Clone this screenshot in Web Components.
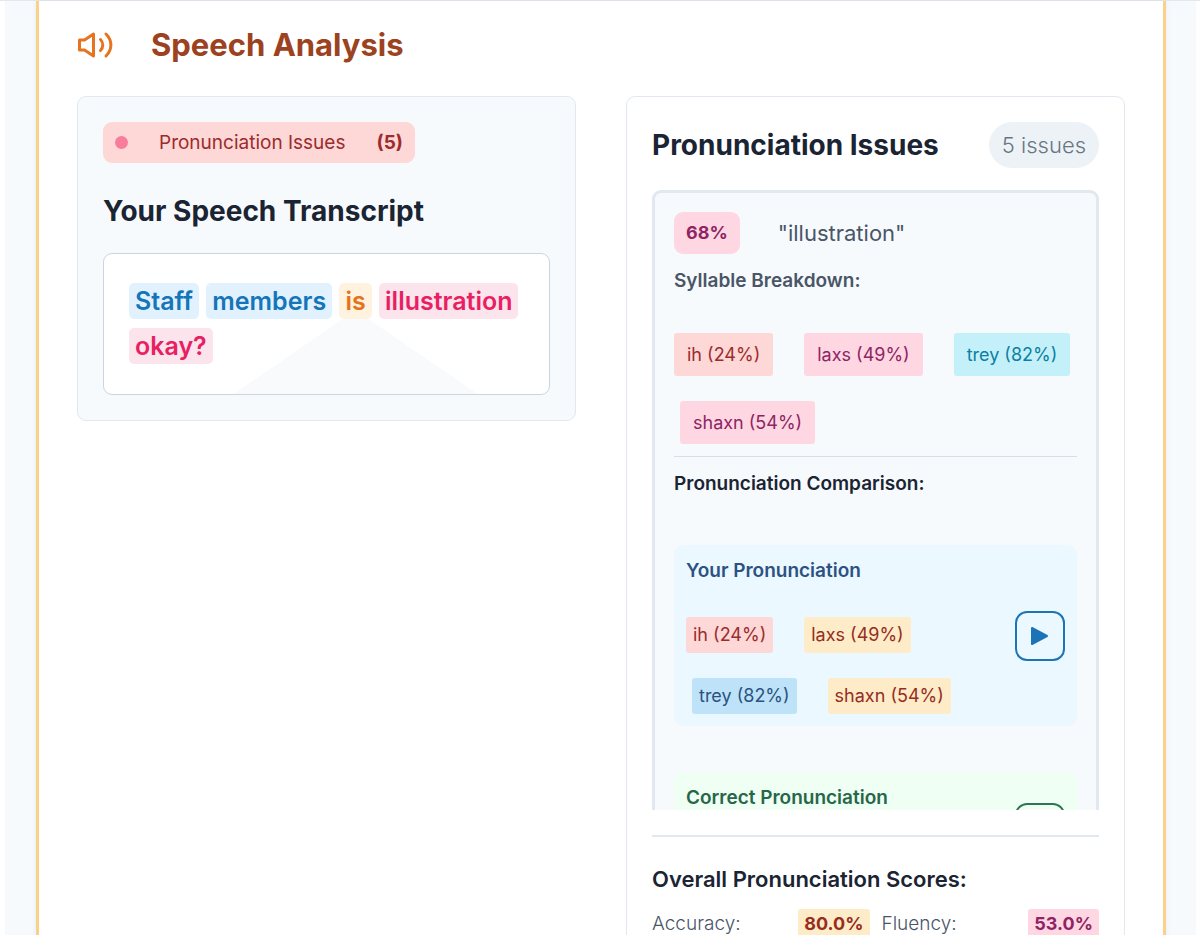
<!DOCTYPE html>
<html lang="en">
<head>
<meta charset="utf-8">
<title>Speech Analysis</title>
<style>
  html { overflow:hidden; }
  body { margin:0; background:#fff; font-family: Inter, "Liberation Sans", sans-serif; color:#1a2433; }
</style>
</head>
<body>
<speech-page>
  <span slot="title">Speech Analysis</span>

  <transcript-card>
    <issue-count slot="filter" count="5">Pronunciation Issues</issue-count>
    <span slot="title">Your Speech Transcript</span>
    <speech-word level="good">Staff</speech-word>
    <speech-word level="good">members</speech-word>
    <speech-word level="fair" pointer>is</speech-word>
    <speech-word level="poor">illustration</speech-word>
    <speech-word level="poor">okay?</speech-word>
  </transcript-card>

  <issues-card>
    <span slot="title">Pronunciation Issues</span>
    <span slot="total">5 issues</span>
    <issue-item score="68%" word="illustration">
      <chip-row slot="syllables">
        <score-chip tone="red" roomy>ih (24%)</score-chip>
        <score-chip tone="pink" roomy>laxs (49%)</score-chip>
        <score-chip tone="cyan" roomy>trey (82%)</score-chip>
        <score-chip tone="pink" roomy>shaxn (54%)</score-chip>
      </chip-row>
      <play-panel tone="blue" label="Your Pronunciation">
        <chip-row>
          <score-chip tone="red">ih (24%)</score-chip>
          <score-chip tone="orange">laxs (49%)</score-chip>
          <score-chip tone="blue">trey (82%)</score-chip>
          <score-chip tone="orange">shaxn (54%)</score-chip>
        </chip-row>
      </play-panel>
      <play-panel tone="green" label="Correct Pronunciation"></play-panel>
    </issue-item>
    <overall-score slot="scores" label="Accuracy:" tone="orange">80.0%</overall-score>
    <overall-score slot="scores" label="Fluency:" tone="pink">53.0%</overall-score>
  </issues-card>
</speech-page>

<script>
// Shared tone rules for chips and score badges
const TONES = `
  .red    { background:#fed7d7; color:#9b2c2c; }
  .pink   { background:#fed7e2; color:#8f2465; }
  .cyan   { background:#c4f1f9; color:#0c7fa3; }
  .orange { background:#feebc8; color:#962d20; }
  .blue   { background:#bee3f8; color:#2c5282; }
`;

class BaseElement extends HTMLElement {
  connectedCallback() {
    if (this.shadowRoot) return;
    this.attachShadow({ mode: 'open' });
    this.shadowRoot.innerHTML = this.render();
  }
}

class SpeechPage extends BaseElement {
  render() {
    return `
      <style>
        :host { display:block; border-top:1px solid #e2e8f0; }
        .backdrop { margin:0 4px 0 5px; padding:0 30px 0 31px; background:#f7fafc; }
        section {
          box-sizing:border-box; min-height:100vh; padding:24px 38px 38px; background:#fff;
          border:solid #fbd08a; border-width:0 3px; box-shadow:0 0 6px rgba(0,0,0,.06);
        }
        header { display:flex; align-items:center; gap:38px; margin-bottom:32px; }
        svg { display:block; width:36px; height:36px; }
        h1 { margin:0; font-size:31px; line-height:39px; font-weight:700; color:#9c4221; }
        .columns { display:grid; grid-template-columns:1fr 1fr; gap:50px; align-items:start; }
      </style>
      <div class="backdrop">
        <section>
          <header>
            <svg viewBox="0 0 36 36" fill="none" stroke="#e6731f" stroke-width="3" stroke-linecap="round" stroke-linejoin="round" aria-hidden="true">
              <path d="M2.500 13H7.500L16.500 7V29L7.500 23H2.500Z"/>
              <path d="M23.500 12.500C26.500 15.500 26.500 20.500 23.500 23.500"/>
              <path d="M29 7C35.500 13.500 35.500 22.500 29 29"/>
            </svg>
            <h1><slot name="title"></slot></h1>
          </header>
          <div class="columns"><slot></slot></div>
        </section>
      </div>`;
  }
}

class IssueCount extends BaseElement {
  render() {
    return `
      <style>
        :host { display:inline-flex; align-items:center; gap:31px; padding:6px 12px; border-radius:9px; background:#fed7d7; color:#9b2c2c; font-size:19px; line-height:29px; }
        i { width:13px; height:13px; border-radius:50%; background:#f87c9b; }
        b { font-weight:700; }
      </style>
      <i></i><slot></slot><b>(${this.getAttribute('count')})</b>`;
  }
}

class TranscriptCard extends BaseElement {
  render() {
    return `
      <style>
        :host { display:flex; flex-direction:column; align-items:flex-start; padding:25px; border:1px solid #e2e8f0; border-radius:9px; background:#f7fafc; }
        h2 { margin:31px 0 25px; font-size:28px; line-height:34px; font-weight:700; }
        p {
          position:relative; isolation:isolate; overflow:hidden; box-sizing:border-box; width:100%;
          margin:0; padding:25px; border:1px solid #cbd5e0; border-radius:9px; background:#fff;
          font-size:25px; line-height:45px; font-weight:600;
        }
      </style>
      <slot name="filter"></slot>
      <h2><slot name="title"></slot></h2>
      <p><slot></slot></p>`;
  }
}

class SpeechWord extends BaseElement {
  render() {
    return `
      <style>
        :host { display:inline-block; position:relative; margin-right:1px; padding:3px 6px; border-radius:5px; line-height:30px; white-space:nowrap; }
        :host([level="good"]) { background:#e1f2fe; color:#1575b9; }
        :host([level="fair"]) { background:#fff3e0; color:#e6731a; }
        :host([level="poor"]) { background:#fce4ec; color:#e91e63; }
        /* wide arrow that opens downwards behind the word */
        .arrow {
          position:absolute; z-index:-1; top:75%; left:50%; width:244px; height:84px; margin-left:-122px;
          background:#f9fafc; clip-path:polygon(50% 0, 100% 100%, 0 100%);
        }
      </style>
      <slot></slot>${this.hasAttribute('pointer') ? '<span class="arrow"></span>' : ''}`;
  }
}

class IssuesCard extends BaseElement {
  render() {
    return `
      <style>
        :host { display:block; padding:25px; border:1px solid #e2e8f0; border-radius:9px; background:#fff; }
        header { display:flex; align-items:center; justify-content:space-between; margin-bottom:22px; }
        h2 { margin:0; font-size:28px; line-height:34px; font-weight:700; }
        .total { padding:6px 13px; border-radius:23px; background:#edf2f7; color:#687582; font-size:22px; line-height:34px; font-weight:300; }
        .list { max-height:620px; overflow:hidden; }
        .overall { margin-top:25px; padding-top:25px; border-top:2px solid #e2e8f0; }
        h3 { margin:0 0 13px; font-size:22px; line-height:34px; font-weight:600; }
        .scores { display:grid; grid-template-columns:1fr 1fr; gap:12px; }
      </style>
      <header><h2><slot name="title"></slot></h2><span class="total"><slot name="total"></slot></span></header>
      <div class="list"><slot></slot></div>
      <div class="overall">
        <h3>Overall Pronunciation Scores:</h3>
        <div class="scores"><slot name="scores"></slot></div>
      </div>`;
  }
}

class IssueItem extends BaseElement {
  render() {
    return `
      <style>
        :host { display:block; padding:19px; border:3px solid #e2e8f0; border-radius:9px; background:#f7fafc; }
        .top { display:flex; align-items:center; gap:38px; margin-bottom:13px; }
        .score { padding:6px 12px; border-radius:9px; background:#fed7e2; color:#8f2465; font-size:18px; line-height:30px; font-weight:700; }
        .word { font-size:22px; line-height:34px; color:#4a5568; }
        h4 { margin:0; font-size:19px; line-height:28px; font-weight:600; }
        .muted { margin-bottom:38px; color:#4a5568; }
        .compare { margin-top:12px; padding-top:13px; border-top:1px solid #d6e0ea; }
        .panels { display:flex; flex-direction:column; gap:46px; margin-top:47px; }
      </style>
      <div class="top">
        <span class="score">${this.getAttribute('score')}</span>
        <span class="word">"${this.getAttribute('word')}"</span>
      </div>
      <h4 class="muted">Syllable Breakdown:</h4>
      <slot name="syllables"></slot>
      <div class="compare">
        <h4>Pronunciation Comparison:</h4>
        <div class="panels"><slot></slot></div>
      </div>`;
  }
}

class ChipRow extends BaseElement {
  render() {
    return `
      <style>
        :host { display:flex; flex-wrap:wrap; gap:25px; }
        ::slotted(:not(:first-child)) { margin-left:6px; }
      </style>
      <slot></slot>`;
  }
}

class ScoreChip extends BaseElement {
  render() {
    return `
      <style>
        ${TONES}
        :host { display:block; font-size:18px; line-height:30px; white-space:nowrap; }
        span { display:block; padding:3px 7px; border-radius:3px; }
        :host([roomy]) { line-height:31px; }
        :host([roomy]) span { padding:6px 13px; }
      </style>
      <span class="${this.getAttribute('tone')}"><slot></slot></span>`;
  }
}

class PlayPanel extends BaseElement {
  render() {
    return `
      <style>
        :host { display:flex; align-items:center; justify-content:space-between; gap:25px; padding:12px; border-radius:9px; }
        :host([tone="blue"]) { background:#ebf8ff; --title:#2c5282; --accent:#1c74b8; }
        :host([tone="green"]) { background:#f0fff4; --title:#276749; --accent:#2f7556; }
        .body { display:flex; flex-direction:column; gap:32px; min-height:88px; }
        h5 { margin:0; font-size:19px; line-height:28px; font-weight:600; color:var(--title); }
        button {
          display:grid; place-items:center; flex:none; box-sizing:border-box; width:50px; height:50px; padding:0;
          border:2px solid var(--accent); border-radius:12px; background:transparent; color:var(--accent); cursor:pointer;
        }
        svg { width:20px; height:20px; }
      </style>
      <div class="body"><h5>${this.getAttribute('label')}</h5><slot></slot></div>
      <button type="button" aria-label="Play ${this.getAttribute('label')}">
        <svg viewBox="0 0 20 20" fill="currentColor" stroke="currentColor" stroke-width="2" stroke-linejoin="round"><path d="M2 2L17 10L2 18Z"/></svg>
      </button>`;
  }
}

class OverallScore extends BaseElement {
  render() {
    return `
      <style>
        ${TONES}
        :host { display:flex; align-items:center; justify-content:space-between; font-size:19px; line-height:30px; color:#4a5568; }
        span { font-weight:300; }
        b { padding:0 6px; border-radius:3px; font-size:18px; font-weight:700; }
      </style>
      <span>${this.getAttribute('label')}</span><b class="${this.getAttribute('tone')}"><slot></slot></b>`;
  }
}

customElements.define('speech-page', SpeechPage);
customElements.define('issue-count', IssueCount);
customElements.define('transcript-card', TranscriptCard);
customElements.define('speech-word', SpeechWord);
customElements.define('issues-card', IssuesCard);
customElements.define('issue-item', IssueItem);
customElements.define('chip-row', ChipRow);
customElements.define('score-chip', ScoreChip);
customElements.define('play-panel', PlayPanel);
customElements.define('overall-score', OverallScore);
</script>
</body>
</html>
